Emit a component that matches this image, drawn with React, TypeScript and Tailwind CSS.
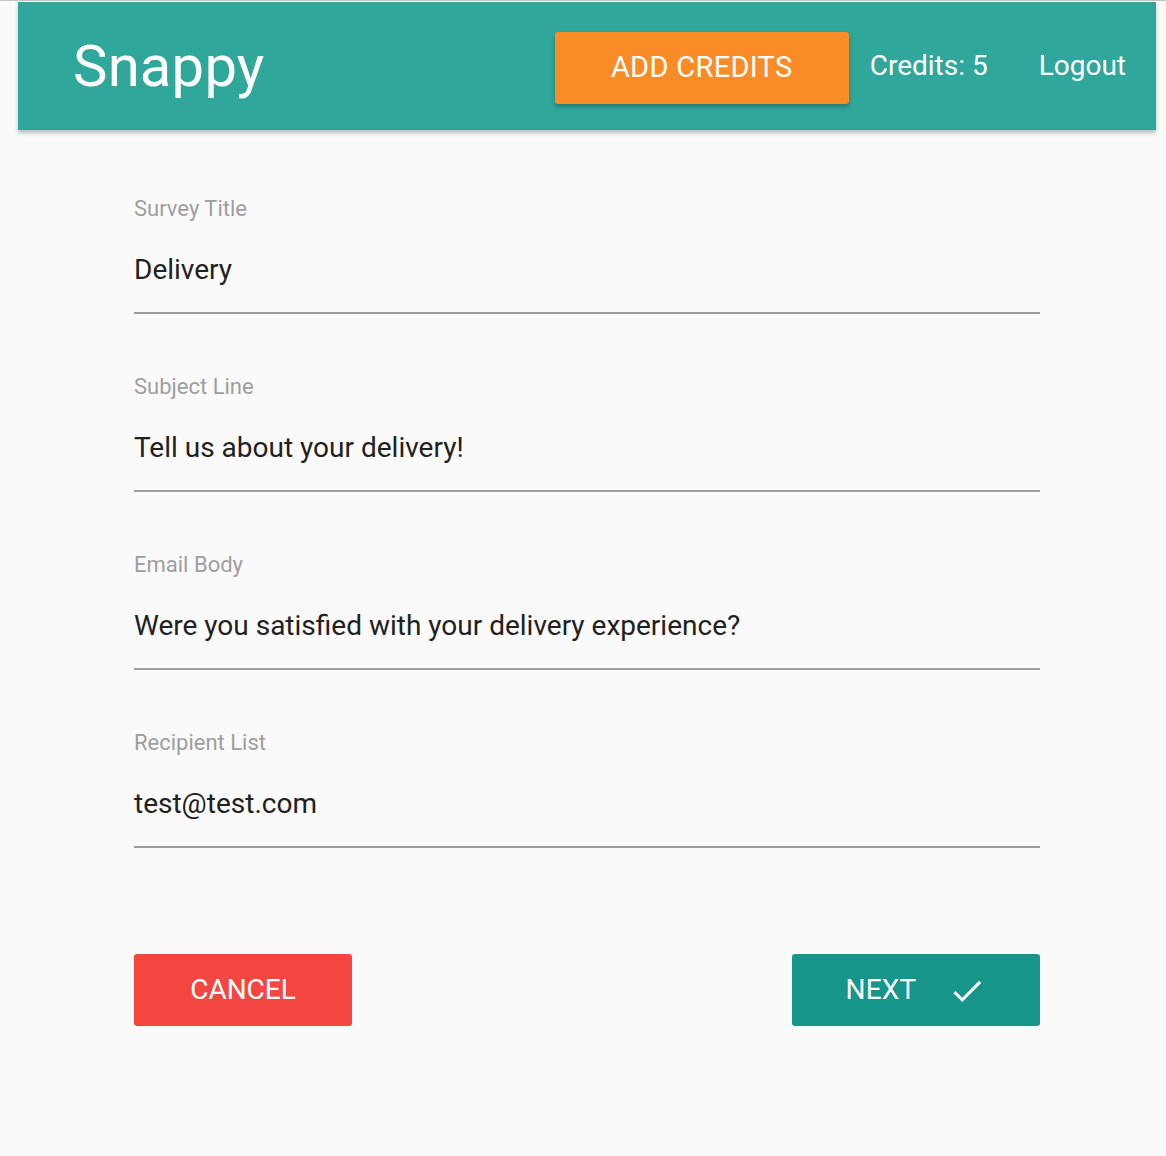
const fields = [
  { label: 'Survey Title', value: 'Delivery' },
  { label: 'Subject Line', value: 'Tell us about your delivery!' },
  { label: 'Email Body', value: 'Were you satisfied with your delivery experience?' },
  { label: 'Recipient List', value: 'test@test.com' },
];

const Header = () => (
  <nav className="ml-[18px] mr-[10px] mt-[1px] h-[128px] bg-[#2fa79a] shadow-[0_3px_4px_rgba(0,0,0,0.25)] flex items-center text-white">
    <a className="ml-[55px] text-[58px] leading-none tracking-[0.2px]">Snappy</a>
    <div className="ml-auto flex items-center">
      <button className="mt-[4px] w-[294px] h-[72px] rounded-[3px] bg-[#f98c26] text-[29px] tracking-[0.3px] uppercase shadow-[0_3px_4px_rgba(0,0,0,0.25)]">
        Add Credits
      </button>
      <span className="ml-[21px] text-[28px]">Credits: 5</span>
      <a className="ml-[51px] mr-[30px] text-[28px]">Logout</a>
    </div>
  </nav>
);

const Field = ({ label, value }: { label: string; value: string }) => (
  <div className="mb-[61px]">
    <label className="block text-[22px] leading-[24px] text-[#9e9e9e]">{label}</label>
    <div className="mt-[25px] pb-[18px] border-b-2 border-[#9e9e9e]">
      <div className="h-[48px] flex items-center text-[28px] text-[#212121]">{value}</div>
    </div>
  </div>
);

export default function App() {
  return (
    <div className="min-h-[1156px] bg-[#fafafa] border-t border-[#c4c4c4] font-['Roboto',sans-serif]">
      <Header />
      <form className="ml-[134px] w-[906px] pt-[67px] flex flex-col">
        {fields.map(f => (
          <Field key={f.label} label={f.label} value={f.value} />
        ))}
        <div className="mt-[45px] flex justify-between">
          <button type="button" className="w-[218px] h-[72px] rounded-[3px] bg-[#f44640] text-white text-[28px] uppercase">
            Cancel
          </button>
          <button type="submit" className="w-[248px] h-[72px] rounded-[3px] bg-[#16958a] text-white text-[28px] uppercase flex items-center justify-center gap-[32px]">
            <span className="tracking-[0.2px]">Next</span>
            <svg width="38" height="38" viewBox="0 0 24 24" fill="white" className="mt-[1px]">
              <path d="M9 16.2L4.8 12l-1.4 1.4L9 19 21 7l-1.4-1.4L9 16.2z" />
            </svg>
          </button>
        </div>
      </form>
    </div>
  );
}
